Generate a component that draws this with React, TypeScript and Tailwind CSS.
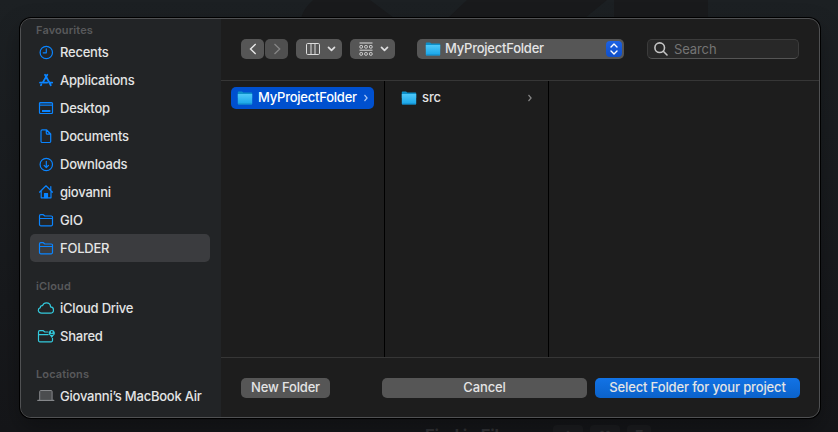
import React from "react";

type IconProps = { children: React.ReactNode; color?: string; sw?: number };
const Icon = ({ children, color = "#0a84ff", sw = 1.2 }: IconProps) => (
  <svg width="20" height="16" viewBox="0 0 20 16" fill="none" stroke={color} strokeWidth={sw} strokeLinecap="round" strokeLinejoin="round" className="shrink-0">
    {children}
  </svg>
);

const Clock = () => (
  <Icon><circle cx="10.3" cy="8.5" r="6.2" /><path d="M10.3 4.8v4H7.2" /></Icon>
);
const Apps = () => (
  <Icon sw={1.8}><path d="M9 2.7l5.8 10.5M11.3 2.7L6.7 10.6M4 10.6h7.2M14 10.6h2.2M5.3 12.6l-.4.7" /></Icon>
);
const Desktop = () => (
  <Icon><rect x="3.5" y="2.5" width="13" height="11" rx="1" /><path d="M4 3.1h12v2.2H4z" fill="#0a84ff" fillOpacity=".45" stroke="none" /><path d="M3.5 5.5h13" strokeOpacity=".7" /><path d="M6 11h8.4" strokeWidth="2" strokeLinecap="butt" /></Icon>
);
const Doc = () => (
  <Icon><path d="M6.3 1.8h4.4l4 4.1v7.3a1.3 1.3 0 0 1-1.3 1.3H6.3A1.3 1.3 0 0 1 5 13.2V3.1a1.3 1.3 0 0 1 1.3-1.3zM10.3 2v3.2a1 1 0 0 0 1 1h3.2M10.9 2.3l3.4 3.7" /></Icon>
);
const Download = () => (
  <Icon><circle cx="10.3" cy="8.5" r="6.2" /><path d="M10.3 5.3v6M8.1 9.3l2.2 2.2 2.2-2.2" /></Icon>
);
const Home = () => (
  <Icon><path d="M3.5 8.2L10 1.8l6.5 6.4M5.2 7v6.8h9.8V7M14.8 2.6v3.5" /><path d="M8.5 13.6V9.5h3v4.1z" fill="#0a84ff" /></Icon>
);
const Folder = () => (
  <Icon><path d="M3.5 12.6V3.9a1.2 1.2 0 0 1 1.2-1.2h2.6l1.5 1.3h6.5a1.2 1.2 0 0 1 1.2 1.2v7.4a1.2 1.2 0 0 1-1.2 1.2H4.7a1.2 1.2 0 0 1-1.2-1.2zM3.5 6.5h13" /></Icon>
);
const Cloud = () => (
  <Icon color="#33c9dc"><path d="M5.6 13.1C3.6 13.1 2.3 11.9 2.3 10.3 2.3 8.9 3.2 8 4.3 7.7 4.2 6.2 5.3 5.3 6.6 5.6 7.2 3.9 8.6 2.9 10.4 2.9c2.4 0 4.1 1.7 4.2 4 1.7.1 2.9 1.4 2.9 3 0 1.8-1.3 3.2-3.2 3.2z" /></Icon>
);
const SharedIcon = () => (
  <Icon color="#33c9dc"><path d="M12 4H8.8L7.3 2.7H3.7a1.2 1.2 0 0 0-1.2 1.2v8.7a1.2 1.2 0 0 0 1.2 1.2h11.6a1.2 1.2 0 0 0 1.2-1.2v-2.3M2.5 6.6h9.7" /><path d="M15.8 2.1a3 3 0 0 1 1.6 5.6L15.8 10l-1.6-2.3a3 3 0 0 1 1.6-5.6z" fill="#33c9dc" stroke="none" /><circle cx="15.8" cy="4" r=".9" fill="#222426" stroke="none" /><path d="M14.7 6.4h2.2" stroke="#222426" strokeWidth=".9" /></Icon>
);
const Laptop = () => (
  <Icon color="#85878a" sw={1}><path d="M3.7 11.8V3.5a1 1 0 0 1 1-1h10.4a1 1 0 0 1 1 1v8.3" fill="#4b4d4f" /><path d="M1.8 12.4h16" strokeWidth="1.2" /></Icon>
);

const BlueFolder = () => (
  <svg width="16" height="14" viewBox="0 0 16 14" className="shrink-0">
    <defs>
      <linearGradient id="folderFace" x1="0" y1="0" x2="0" y2="1">
        <stop offset="0" stopColor="#4fc8f8" />
        <stop offset="1" stopColor="#16a4e8" />
      </linearGradient>
    </defs>
    <path d="M.8 1.3Q.8.5 1.6.5H5l1.3.9h8.2q.7 0 .7.8V7H.8z" fill="#0c8fc9" />
    <path d="M.8 2.9h14.4v9.9q0 .6-.6.6H1.4q-.6 0-.6-.6z" fill="url(#folderFace)" />
    <path d="M1.2 12.9h13.6" stroke="#1189c5" strokeWidth=".8" />
  </svg>
);

const Chevron = ({ className }: { className: string }) => (
  <svg width="6" height="8" viewBox="0 0 6 8" fill="none" stroke="currentColor" strokeWidth="1.2" className={className}>
    <path d="M1.5 1l2.6 3-2.6 3" />
  </svg>
);

const Down = () => (
  <svg width="9" height="6" viewBox="0 0 9 6" fill="none" stroke="#dededf" strokeWidth="1.7" strokeLinecap="round" strokeLinejoin="round">
    <path d="M1.5 1.3l3 3 3-3" />
  </svg>
);

const Row = ({ icon, label, tracking = "tracking-[-0.23px]", selected = false }: { icon: React.ReactNode; label: string; tracking?: string; selected?: boolean }) => (
  <div className={`flex h-7 items-center gap-[4px] rounded-[5px] pl-[6px] ${selected ? "bg-[#3b3c3f]" : ""}`}>
    {icon}
    <span className={`pt-[2px] whitespace-nowrap text-[#e4e4e5] ${tracking}`}>{label}</span>
  </div>
);

const Heading = ({ children }: { children: React.ReactNode }) => (
  <div className="flex h-4 items-center pl-[6px] text-[11px] font-semibold tracking-[0.12px] text-[#58595b]">{children}</div>
);

export default function App() {
  return (
    <div className="relative h-[432px] w-[838px] overflow-hidden bg-linear-to-b from-[#1c2023] to-[#151619] font-[Inter,sans-serif] text-[13px] font-medium text-[#e4e4e5]">
      <svg className="absolute inset-0" width="838" height="432">
        <path d="M301 18Q304 8 313 0h57l24 18zM448 18L467 0h140l-22 18zM614 0h94v18h-94z" fill="#191a1c" />
      </svg>
      <div className="absolute top-[425px] left-[425px] flex whitespace-nowrap text-[16.5px] leading-[21px] font-bold text-[#303134]">
        <span className="w-[128px] tracking-[-0.2px]">Find in Files</span>
        <span className="w-[30px] rounded bg-[#1b1c1f] text-center text-[14px]">⇧</span>
        <span className="ml-[7px] w-[30px] rounded bg-[#1b1c1f] text-center text-[14px]">⌘</span>
        <span className="ml-[7px] w-[24px] rounded bg-[#1b1c1f] text-center text-[14px]">F</span>
      </div>
      <div className="relative ml-5 pt-[18px]">
        <div className="flex h-[400px] w-[800px] overflow-hidden rounded-[11px] border border-[#505153] bg-[#1d1d1d] shadow-[0_0_0_1px_#000,0_10px_24px_rgba(0,0,0,0.3)]">
          <aside className="flex w-[200px] shrink-0 flex-col bg-[#222426] pt-[3px] pr-[11px] pl-[9px]">
            <Heading>Favourites</Heading>
            <Row icon={<Clock />} label="Recents" />
            <Row icon={<Apps />} label="Applications" />
            <Row icon={<Desktop />} label="Desktop" />
            <Row icon={<Doc />} label="Documents" />
            <Row icon={<Download />} label="Downloads" />
            <Row icon={<Home />} label="giovanni" />
            <Row icon={<Folder />} label="GIO" tracking="tracking-[-0.1px]" />
            <Row icon={<Folder />} label="FOLDER" selected />
            <div className="h-4" />
            <Heading>iCloud</Heading>
            <Row icon={<Cloud />} label="iCloud Drive" />
            <Row icon={<SharedIcon />} label="Shared" />
            <div className="h-4" />
            <Heading>Locations</Heading>
            <Row icon={<Laptop />} label="Giovanni’s MacBook Air" />
          </aside>
          <main className="flex min-w-0 flex-1 flex-col">
            <header className="flex h-[62px] shrink-0 items-start border-b border-[#363636] px-5 pt-5">
              <button className="flex h-5 w-[23px] items-center justify-center rounded-[5px] bg-[#565656]">
                <svg width="8" height="12" viewBox="0 0 8 12" fill="none" stroke="#e6e6e6" strokeWidth="1.4"><path d="M6.7 1L1.5 6l5.2 5" /></svg>
              </button>
              <button className="ml-px flex h-5 w-[23px] items-center justify-center rounded-[5px] bg-[#4f4f4f]">
                <svg width="8" height="12" viewBox="0 0 8 12" fill="none" stroke="#858585" strokeWidth="1.3"><path d="M1.5 1l5.2 5-5.2 5" /></svg>
              </button>
              <button className="ml-2 flex h-5 w-[46px] items-center gap-[7px] rounded-[5px] bg-[#565656] pl-[10px]">
                <svg width="14" height="12" viewBox="0 0 14 12" fill="none" stroke="#dcdcdc" strokeWidth="1"><rect x=".5" y=".5" width="13" height="11" rx="1.2" /><path d="M5 .5v11M9 .5v11" /></svg>
                <Down />
              </button>
              <button className="ml-2 flex h-5 w-[45px] items-center gap-[7px] rounded-[5px] bg-[#565656] pl-[9px]">
                <svg width="14" height="15" viewBox="0 0 14 15" fill="none" stroke="#dcdcdc" strokeWidth="1">
                  <path d="M.5 1h13M.5 8.2h13" />
                  <rect x=".9" y="3.5" width="2.6" height="2.6" rx=".7" /><rect x="5.7" y="3.5" width="2.6" height="2.6" rx=".7" /><rect x="10.5" y="3.5" width="2.6" height="2.6" rx=".7" />
                  <rect x=".9" y="10.6" width="2.6" height="2.6" rx=".7" /><rect x="5.7" y="10.6" width="2.6" height="2.6" rx=".7" /><rect x="10.5" y="10.6" width="2.6" height="2.6" rx=".7" />
                </svg>
                <Down />
              </button>
              <button className="ml-[22px] flex h-5 w-[207px] items-center rounded-[5px] bg-[#565656] pr-[2px] pl-2">
                <BlueFolder />
                <span className="ml-[4px] tracking-[-0.23px]">MyProjectFolder</span>
                <span className="ml-auto flex h-4 w-4 items-center justify-center rounded-[4px] bg-linear-to-b from-[#1c62e5] to-[#104fc9]">
                  <svg width="8" height="12" viewBox="0 0 8 12" fill="none" stroke="#fff" strokeWidth="1.4" strokeLinecap="round" strokeLinejoin="round"><path d="M1 4l3-3 3 3M1 8l3 3 3-3" /></svg>
                </span>
              </button>
              <div className="ml-[23px] flex h-5 w-[152px] items-center rounded-[5px] border border-[#3b3b3b] border-b-[#555] bg-[#282828] pl-[6px]">
                <svg width="14" height="14" viewBox="0 0 14 14" fill="none" stroke="#c4c4c4" strokeWidth="1.6" strokeLinecap="round"><circle cx="5.7" cy="5.7" r="4.8" /><path d="M9.3 9.3l3.7 3.7" /></svg>
                <span className="ml-[6px] pt-[2px] font-normal tracking-[-0.1px] text-[#747474]">Search</span>
              </div>
            </header>
            <section className="flex min-h-0 flex-1">
              <div className="w-[164px] border-r border-black px-[10px] pt-[6px]">
                <div className="flex h-[22px] w-[143px] items-center rounded-[5px] bg-[#0050cf] pl-[6px] text-white">
                  <BlueFolder />
                  <span className="ml-[5px] tracking-[-0.23px]">MyProjectFolder</span>
                  <Chevron className="mr-[5px] ml-auto text-[#a6c4f5]" />
                </div>
              </div>
              <div className="w-[164px] border-r border-black px-[10px] pt-[6px]">
                <div className="flex h-[22px] w-[143px] items-center pl-[6px]">
                  <BlueFolder />
                  <span className="ml-[5px] tracking-[-0.1px]">src</span>
                  <Chevron className="mr-[5px] ml-auto text-[#848484]" />
                </div>
              </div>
            </section>
            <footer className="flex h-[60px] shrink-0 items-start border-t border-[#363636] pt-5 pr-[19px] pl-5">
              <button className="h-5 w-[89px] rounded-[5px] bg-[#565656] pb-[2px] leading-[18px]"><span className="tracking-[-0.15px]">New Folder</span></button>
              <button className="ml-[52px] h-5 w-[205px] rounded-[5px] bg-[#565656] pb-[2px] leading-[18px]"><span className="tracking-[-0.15px]">Cancel</span></button>
              <button className="ml-2 h-5 w-[205px] rounded-[5px] bg-linear-to-b from-[#1273e6] to-[#0b62ca] pb-[2px] leading-[18px] whitespace-nowrap"><span className="tracking-[-0.14px]">Select Folder for your project</span></button>
            </footer>
          </main>
        </div>
      </div>
    </div>
  );
}
